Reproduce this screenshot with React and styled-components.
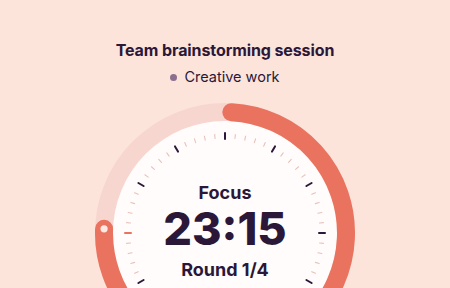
import React from 'react';
import styled, { createGlobalStyle } from 'styled-components';

const GlobalStyle = createGlobalStyle`
  html, body {
    margin: 0;
    padding: 0;
    background: #fce4da;
    overflow: hidden;
  }
  body {
    font-family: Inter, "Noto Sans", sans-serif;
    color: #2b1738;
  }
`;

const Page = styled.div`
  width: 450px;
  height: 288px;
  display: flex;
  flex-direction: column;
  align-items: center;
  padding-top: 39px;
  box-sizing: border-box;
  overflow: hidden;
`;

const Title = styled.h1`
  margin: 0;
  font-size: 16px;
  line-height: 22px;
  font-weight: 700;
  letter-spacing: -0.1px;
`;

const Tag = styled.div`
  display: flex;
  align-items: center;
  gap: 7px;
  margin-top: 5px;
  font-size: 14.5px;
  line-height: 22px;
  font-weight: 400;
`;

const TagDot = styled.span`
  width: 7px;
  height: 7px;
  border-radius: 50%;
  background: ${(p) => p.color};
`;

const Dial = styled.div`
  position: relative;
  width: 260px;
  height: 260px;
  margin-top: 15px;
  flex-shrink: 0;
`;

const Face = styled.svg`
  position: absolute;
  inset: 0;
`;

const Readout = styled.div`
  position: absolute;
  inset: 0;
  display: flex;
  flex-direction: column;
  align-items: center;
  padding-top: 79px;
`;

const Mode = styled.div`
  font-size: 18px;
  line-height: 22px;
  font-weight: 700;
`;

const Time = styled.div`
  font-size: 45px;
  line-height: 45px;
  font-weight: 800;
  letter-spacing: 0;
  margin-top: 2px;
`;

const Round = styled.div`
  font-size: 18px;
  line-height: 22px;
  font-weight: 700;
  margin-top: 8px;
`;

const C = 130;
const pt = (deg, r) => {
  const a = (deg * Math.PI) / 180;
  return [C + r * Math.sin(a), C - r * Math.cos(a)];
};

const arcPath = (from, to, r) => {
  const [x1, y1] = pt(from, r);
  const [x2, y2] = pt(to, r);
  const large = to - from > 180 ? 1 : 0;
  return `M ${x1} ${y1} A ${r} ${r} 0 ${large} 1 ${x2} ${y2}`;
};

const ticks = Array.from({ length: 60 }, (_, i) => i);

const TimerFace = ({ progressEnd }) => {
  const [dx, dy] = pt(progressEnd, 121);
  return (
    <Face width="260" height="260" viewBox="0 0 260 260">
      <circle cx={C} cy={C} r="121" fill="none" stroke="#f8d6d0" strokeWidth="18" />
      <circle cx={C} cy={C} r="112" fill="#fffcfb" />
      <path d={arcPath(3, progressEnd, 121)} fill="none" stroke="#e9735f" strokeWidth="18" strokeLinecap="round" />
      <circle cx={dx} cy={dy} r="3.6" fill="#fde9e4" />
      {ticks.map((i) => {
        const major = i % 5 === 0;
        const [x1, y1] = pt(i * 6, major ? 94 : 95);
        const [x2, y2] = pt(i * 6, major ? 100 : 99);
        const color = i === 45 ? '#e9735f' : major ? '#2b1738' : '#e8c2bc';
        return (
          <line
            key={i}
            x1={x1}
            y1={y1}
            x2={x2}
            y2={y2}
            stroke={color}
            strokeWidth={major ? 2 : 1.1}
            strokeLinecap="round"
          />
        );
      })}
    </Face>
  );
};

export default function App() {
  return (
    <>
      <GlobalStyle />
      <Page>
        <Title>Team brainstorming session</Title>
        <Tag>
          <TagDot color="#8c6f8e" />
          Creative work
        </Tag>
        <Dial>
          <TimerFace progressEnd={272} />
          <Readout>
            <Mode>Focus</Mode>
            <Time>23:15</Time>
            <Round>Round 1/4</Round>
          </Readout>
        </Dial>
      </Page>
    </>
  );
}
